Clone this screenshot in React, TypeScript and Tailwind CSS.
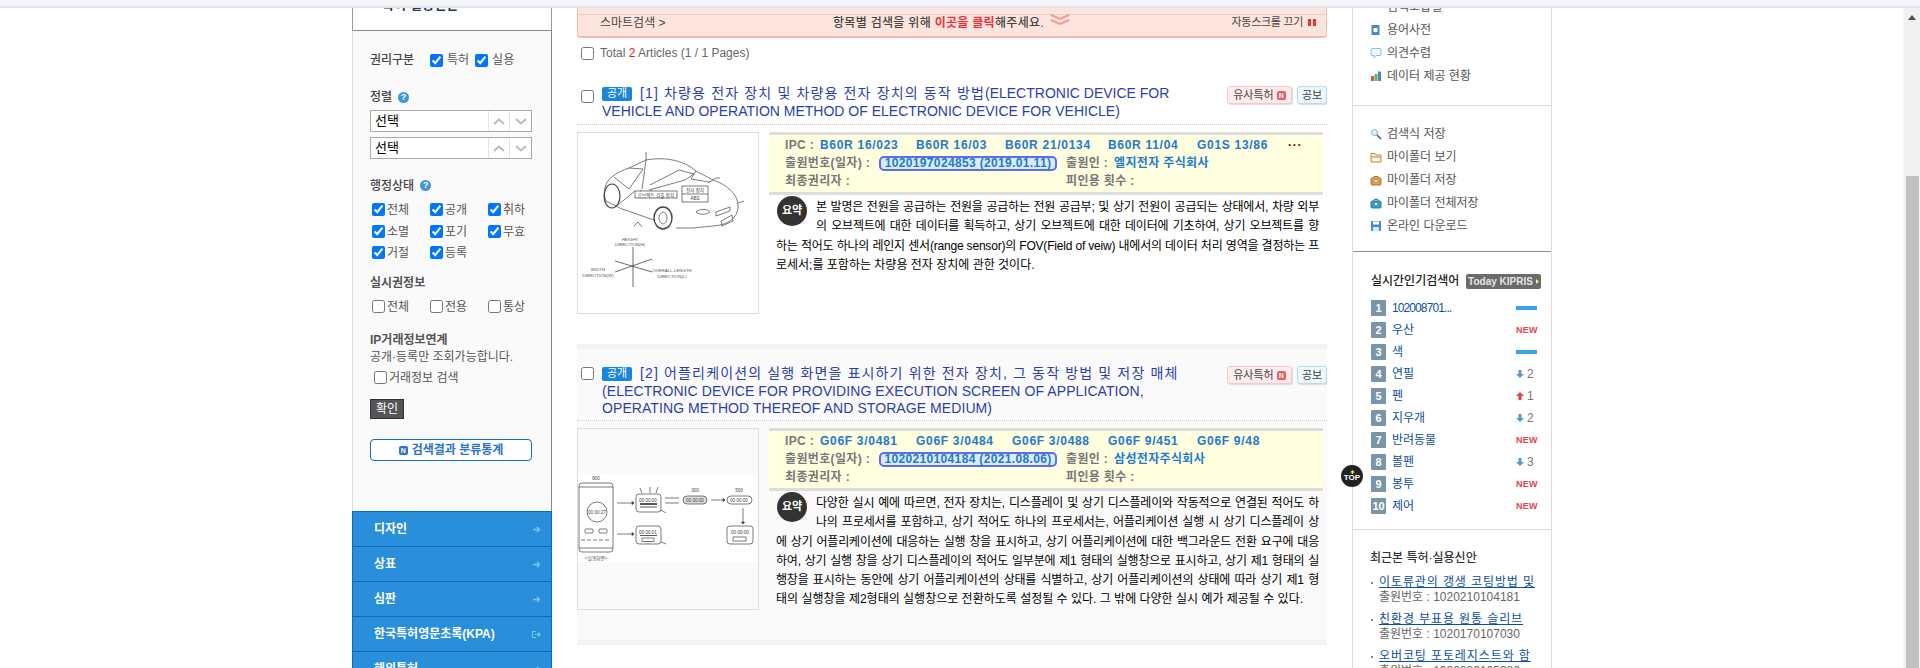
import React from "react";

const font = "font-['Liberation_Sans','Noto_Sans_CJK_KR',sans-serif]";

function Check({ label, checked, w = "w-[58px]" }: { label: string; checked?: boolean; w?: string }) {
  return (
    <label className={`flex items-center gap-[2px] ${w} text-[12px] leading-[13px] text-[#555]`}>
      <input type="checkbox" defaultChecked={checked} className="shrink-0" />
      <span className="translate-y-[1px]">{label}</span>
    </label>
  );
}

function Help() {
  return (
    <span className="flex h-[11px] w-[11px] items-center justify-center rounded-full bg-[#3f97d8] text-[9px] font-bold leading-none text-white">?</span>
  );
}

function FakeSelect() {
  return (
    <div className="flex h-[22px] w-[162px] items-center border border-[#aaa] bg-white">
      <span className="flex-1 pl-[4px] text-[13px] text-black">선택</span>
      <span className="flex h-full w-[21px] items-center justify-center border-l border-[#e6e6e6]">
        <svg width="12" height="7" viewBox="0 0 12 7"><path d="M1 6 6 1.5 11 6" fill="none" stroke="#bbb" strokeWidth="2" /></svg>
      </span>
      <span className="flex h-full w-[22px] items-center justify-center border-l border-[#e6e6e6]">
        <svg width="12" height="7" viewBox="0 0 12 7"><path d="M1 1 6 5.5 11 1" fill="none" stroke="#bbb" strokeWidth="2" /></svg>
      </span>
    </div>
  );
}

function NavRow({ label, door }: { label: string; door?: boolean }) {
  return (
    <div className="flex h-[35px] shrink-0 items-center justify-between border-t border-[#0d68bf] bg-[#298fdb] pl-[21px] pr-[10px] text-[12px] font-bold text-white">
      <span>{label}</span>
      <svg width="9" height="7" viewBox="0 0 9 7">
        {door ? <path d="M4 .5H.5v6H4M3 3.5h5M6 1.5l2 2-2 2" fill="none" stroke="#7cc3ee" strokeWidth="1.2" /> : <path d="M1 3.5h6M5 1l2.5 2.5L5 6" fill="none" stroke="#7cc3ee" strokeWidth="1.4" />}
      </svg>
    </div>
  );
}

function LeftColumn() {
  return (
    <div className="flex w-[200px] shrink-0 flex-col overflow-hidden">
      <div className="h-[22px] shrink-0 overflow-hidden border-x border-[#999] bg-white pl-[29px]">
        <div className="-mt-[10px] text-[13px] font-bold leading-[14px] text-[#1f3a68]">특허·실용신안</div>
      </div>
      <div className="flex h-[481px] shrink-0 flex-col border-t border-r border-t-[#888] border-r-[#888] border-l border-l-[#ddd] bg-[#fafafa] pl-[17px]">
        <div className="mt-[22px] flex h-[14px] items-center text-[12px] font-medium text-[#444]">
          <span className="w-[60px]">권리구분</span>
          <label className="mr-[6px] flex items-center gap-[4px] font-normal text-[#555]"><input type="checkbox" defaultChecked />특허</label>
          <label className="flex items-center gap-[4px] font-normal text-[#555]"><input type="checkbox" defaultChecked />실용</label>
        </div>
        <div className="mt-[23px] flex h-[14px] items-center gap-[6px] text-[12px] font-medium text-[#444]">정렬 <Help /></div>
        <div className="mt-[6px]"><FakeSelect /></div>
        <div className="mt-[5px]"><FakeSelect /></div>
        <div className="mt-[19px] flex h-[14px] items-center gap-[6px] pt-[1px] text-[12px] font-medium text-[#444]">행정상태 <Help /></div>
        <div className="mt-[11px] grid grid-cols-[58px_58px_58px] gap-y-[8.5px] pl-[2px]">
          <Check label="전체" checked /><Check label="공개" checked /><Check label="취하" checked />
          <Check label="소멸" checked /><Check label="포기" checked /><Check label="무효" checked />
          <Check label="거절" checked /><Check label="등록" checked />
        </div>
        <div className="mt-[16px] h-[14px] pt-[1px] text-[12px] font-bold leading-[14px] text-[#555]">실시권정보</div>
        <div className="mt-[11px] grid grid-cols-[58px_58px_58px] pl-[2px]">
          <Check label="전체" /><Check label="전용" /><Check label="통상" />
        </div>
        <div className="mt-[19px] h-[14px] pt-[1px] text-[12px] font-bold leading-[14px] text-[#555]">IP거래정보연계</div>
        <div className="mt-[3px] h-[14px] pt-[1px] text-[12px] leading-[14px] text-[#555]">공개·등록만 조회가능합니다.</div>
        <div className="mt-[8px] pl-[4px]"><Check label="거래정보 검색" w="w-[120px]" /></div>
        <div className="mt-[15px] flex h-[20px] w-[34px] items-center justify-center border border-[#333] bg-[#555] text-[12px] text-white">확인</div>
        <div className="mt-[20px] flex h-[22px] w-[162px] items-center justify-center gap-[4px] rounded-[4px] border border-[#0b6fc6] bg-white text-[12px] font-bold text-[#2b74c8]">
          <span className="flex h-[9px] w-[9px] items-center justify-center rounded-[2px] bg-[#2b74c8] text-[7px] leading-none text-white">N</span>
          검색결과 분류통계
        </div>
      </div>
      <div className="flex flex-col border-x border-[#0d68bf]">
        <NavRow label="디자인" />
        <NavRow label="상표" />
        <NavRow label="심판" />
        <NavRow label="한국특허영문초록(KPA)" door />
        <NavRow label="해외특허" />
      </div>
    </div>
  );
}

function CarDrawing() {
  return (
    <svg width="180" height="180" viewBox="0 0 180 180" fill="none" stroke="#444" strokeWidth=".7">
      <path d="M68 27V19M27 55c1-9 12-16 24-20l17-8c17-3 36-1 50 11l17 9c15 5 25 15 25 26 0 12-10 19-25 20l-20 2H98M76 87 44 76 28 68c-2-5-2-9-1-13" />
      <path d="M36 44l15 12 14-20-14-1M68 27l-4 29M72 52l29-15 15 4-9 6-36 10M118 38l-5 8 18 3" />
      <path d="M62 57c3 3 9 3 12 0M40 72l17-14" />
      <ellipse cx="34" cy="63" rx="8" ry="12" strokeWidth="1.2" />
      <ellipse cx="85" cy="85" rx="9" ry="11" strokeWidth="1.4" />
      <ellipse cx="85" cy="85" rx="4" ry="6" />
      <path d="M118 79c4-4 12-3 14 0-4 3-11 3-14 0ZM138 79l14-5v4l-14 5ZM143 88l11-6 1 6-11 5Z" />
      <rect x="57" y="58" width="42" height="7" fill="#fff" />
      <text x="78" y="63.5" fontSize="4.6" fill="#444" stroke="none" textAnchor="middle">오브젝트 검출 장치</text>
      <rect x="104" y="53" width="26" height="16" fill="#fff" />
      <path d="M104 61h26" />
      <text x="117" y="59" fontSize="4.6" fill="#444" stroke="none" textAnchor="middle">전자 장치</text>
      <text x="117" y="67" fontSize="4.6" fill="#444" stroke="none" textAnchor="middle">ABS</text>
      <path d="M130 50l8-5h4M160 70l6-2M64 94l-4-5-4 4" />
      <path d="M55 114v40M37 128l37 11M37 139l37-13" strokeWidth=".8" />
      <g fill="#555" stroke="none" fontSize="4.4" textAnchor="middle">
        <text x="52" y="108">HEIGHT</text>
        <text x="52" y="113">DIRECTION(H)</text>
        <text x="20" y="138">WIDTH</text>
        <text x="20" y="144">DIRECTION(W)</text>
        <text x="94" y="139">OVERALL-LENGTH</text>
        <text x="94" y="145">DIRECTION(L)</text>
      </g>
    </svg>
  );
}

function FlowDrawing() {
  return (
    <svg width="180" height="180" viewBox="0 0 180 180" fill="none" stroke="#444" strokeWidth=".7">
      <rect x="0" y="46" width="180" height="87" fill="#fff" stroke="none" />
      <rect x="1" y="54" width="34" height="69" rx="3" />
      <path d="M1 58h34M1 119h34" />
      <circle cx="19" cy="83" r="10" />
      <rect x="7" y="100" width="8" height="4" rx="1" />
      <rect x="21" y="100" width="8" height="4" rx="1" />
      <path d="M3 111h30" strokeDasharray="4 2" />
      <path d="M39 74h17M39 105h17M87 69h14M87 74h14M133 71h14M165 79v16" />
      <path d="M56 74l-2-1.500v3ZM56 105l-2-1.500v3ZM147 71l-2-1.500v3ZM165 95l-1.500-2h3Z" fill="#444" />
      <rect x="58" y="65" width="25" height="18" rx="3" />
      <path d="M62 74.500h17M62 75.500h17M62 78h17" stroke="#111" />
      <rect x="58" y="97" width="25" height="18" rx="3" />
      <path d="M62 106.500h17" stroke="#111" />
      <rect x="64" y="109" width="12" height="3.500" />
      <rect x="105" y="67" width="24" height="8" rx="4" fill="#ddd" />
      <rect x="149" y="67" width="25" height="8" rx="4" />
      <rect x="149" y="97" width="26" height="18" rx="3" />
      <rect x="155" y="108" width="13" height="4" />
      <path d="M62 59l2 5M72 58v6M80 58l-2 6M83 81l5 3M83 113l5 2" />
      <g fill="#444" stroke="none" fontSize="4.600" textAnchor="middle">
        <text x="19" y="85">00:00:27</text>
        <text x="70" y="73">00:00:00</text>
        <text x="70" y="105">00:00:01</text>
        <text x="117" y="73">00:00:00</text>
        <text x="161" y="73">00:00:00</text>
        <text x="162" y="105">00:00:00</text>
        <text x="18" y="131">&lt;실행화면&gt;</text>
        <text x="18" y="51">800</text>
        <text x="117" y="63">300</text>
        <text x="161" y="63">500</text>
      </g>
    </svg>
  );
}

function Yellow({ ipc, num, applicant, more }: { ipc: [string, string][]; num: string; applicant: string; more?: boolean }) {
  return (
    <div className="h-[63px] w-[554px] shrink-0 border-y-[3px] border-[#ddd] bg-[#ffffe0] pl-[16px] text-[12px] font-bold tracking-[0.35px] text-[#777]">
      <div className="flex h-[18px] items-center pt-[2px]">
        <span className="w-[35px]">IPC :</span>
        <span className="flex flex-1 tracking-[0.7px] text-[#2279d0]">
          {ipc.map(([code, w]) => (
            <span key={code} className={`${w} whitespace-pre`}>{code}</span>
          ))}
          {more && <span className="ml-[-6px] text-[#800]">···</span>}
        </span>
      </div>
      <div className="flex h-[18px] items-center pt-[2px]">
        <span className="w-[94px]">출원번호(일자) :</span>
        <span className="flex h-[15px] w-[178px] items-center justify-center rounded-[5px] border-2 border-[#5a6cf0] bg-[#dcecf5] text-[#2279d0]">{num}</span>
        <span className="ml-[9px] w-[48px]">출원인 :</span>
        <span className="text-[#2279d0]">{applicant}</span>
      </div>
      <div className="flex h-[18px] items-center pt-[2px]">
        <span className="w-[281px]">최종권리자 :</span>
        <span>피인용 횟수 :</span>
      </div>
    </div>
  );
}

function Abstract({ lines }: { lines: string[] }) {
  return (
    <div className="mt-[1px] ml-[7px] w-[543px] pt-[2px] text-[12px] leading-[19.3px] text-black">
      <div className="float-left mr-[9px] ml-[1px] -mt-[2px] flex h-[30px] w-[30px] items-center justify-center rounded-full bg-[#333] text-[11px] font-bold text-white">요약</div>
      {lines.map((l, i) => (
        <div key={i} className={i === lines.length - 1 ? "whitespace-nowrap" : "whitespace-nowrap tracking-[-0.2px] [text-align-last:justify]"}>{l}</div>
      ))}
    </div>
  );
}

function TitleActions() {
  return (
    <div className="flex shrink-0 gap-[5px] pt-[1px]">
      <span className="flex h-[18px] w-[65px] items-center justify-center gap-[3px] rounded-[3px] border border-[#f6c9c9] bg-[#ffecec] text-[11px] text-[#444] shadow-[1px_1px_1px_#ddd]">
        유사특허
        <span className="flex h-[9px] w-[9px] items-center justify-center rounded-[2px] bg-[#ee5a64] text-[7px] font-bold leading-none text-white">N</span>
      </span>
      <span className="flex h-[18px] w-[30px] items-center justify-center rounded-[3px] border border-[#b7d9e8] bg-[#eef7fb] text-[11px] text-[#444] shadow-[1px_1px_1px_#ddd]">공보</span>
    </div>
  );
}

function Badge() {
  return <span className="mr-[8px] inline-flex h-[14px] w-[30px] items-center justify-center rounded-[2px] bg-[#1b86d9] align-[1px] text-[11px] font-normal tracking-normal text-white">공개</span>;
}

function Results() {
  return (
    <div className="flex w-[750px] shrink-0 flex-col overflow-hidden">
      <div className="h-[30px] shrink-0 rounded-b-[4px] border-b-[2px] border-x border-[#f6bca8] bg-[#fde4dc] text-[12px] text-[#444]">
        <div className="h-[7px] border-b border-[#e9cfc7]" />
        <div className="flex h-[15px] items-center pl-[22px] pr-[10px]">
          <span className="w-[233px]">스마트검색 &gt;</span>
          <span className="font-medium tracking-[0.3px]">항목별 검색을 위해 <b className="text-[#e8343c]">이곳을 클릭</b>해주세요.</span>
          <svg className="ml-[6px] -mt-[6px]" width="20" height="12" viewBox="0 0 20 12" fill="none" stroke="#f59b8f" strokeWidth="2"><path d="M1 1l9 4 9-4M1 6l9 4 9-4" /></svg>
          <span className="ml-auto text-[11px] tracking-[-0.3px]">자동스크롤 끄기</span>
          <span className="ml-[5px] flex gap-[2px]"><i className="block h-[7px] w-[3px] bg-[#e33]" /><i className="block h-[7px] w-[3px] bg-[#e33]" /></span>
        </div>
      </div>
      <div className="mt-[8px] flex h-[14px] items-center pl-[4px] text-[12px] text-[#666]">
        <input type="checkbox" />
        <span className="ml-[6px]">Total <span className="text-[#e81c1c]">2</span> Articles (1 / 1 Pages)</span>
      </div>

      <div className="mt-[25px] flex h-[39px] items-start pl-[4px]">
        <input type="checkbox" className="mt-[5px] shrink-0" />
        <div className="ml-[8px] flex-1 whitespace-nowrap text-[14px] leading-[17.5px] text-[#2c3fa8]">
          <Badge /><span className="tracking-[1.15px]">[1] 차량용 전자 장치 및 차량용 전자 장치의 동작 방법</span>(ELECTRONIC DEVICE FOR<br />
          VEHICLE AND OPERATION METHOD OF ELECTRONIC DEVICE FOR VEHICLE)
        </div>
        <TitleActions />
      </div>
      <div className="h-[1px] border-t border-dotted border-[#ccc]" />
      <div className="mt-[7px] flex h-[212px] shrink-0 gap-[10px]">
        <div className="h-[182px] w-[182px] shrink-0 border border-[#ddd] bg-white"><CarDrawing /></div>
        <div>
          <Yellow
            more
            ipc={[["B60R 16/023", "w-[96px]"], ["B60R 16/03", "w-[89px]"], ["B60R 21/0134", "w-[103px]"], ["B60R 11/04", "w-[89px]"], ["G01S 13/86", "w-[97px]"]]}
            num="1020197024853 (2019.01.11)"
            applicant="엘지전자 주식회사"
          />
          <Abstract lines={[
            "본 발명은 전원을 공급하는 전원을 공급하는 전원 공급부; 및 상기 전원이 공급되는 상태에서, 차량 외부",
            "의 오브젝트에 대한 데이터를 획득하고, 상기 오브젝트에 대한 데이터에 기초하여, 상기 오브젝트를 향",
            "하는 적어도 하나의 레인지 센서(range sensor)의 FOV(Field of veiw) 내에서의 데이터 처리 영역을 결정하는 프",
            "로세서;를 포함하는 차량용 전자 장치에 관한 것이다.",
          ]} />
        </div>
      </div>

      <div className="h-[301px] shrink-0 border-y-[5px] border-[#f3f3f3] bg-[#fafafa]">
        <div className="mt-[16px] flex h-[55px] items-start pl-[4px]">
          <input type="checkbox" className="mt-[2px] shrink-0" />
          <div className="ml-[8px] flex-1 whitespace-nowrap text-[14px] leading-[17.5px] tracking-[0.08px] text-[#2c3fa8]">
            <Badge /><span className="tracking-[1.15px]">[2] 어플리케이션의 실행 화면을 표시하기 위한 전자 장치, 그 동작 방법 및 저장 매체</span><br />
            (ELECTRONIC DEVICE FOR PROVIDING EXECUTION SCREEN OF APPLICATION,<br />
            OPERATING METHOD THEREOF AND STORAGE MEDIUM)
          </div>
          <TitleActions />
        </div>
        <div className="h-[1px] border-t border-dotted border-[#ccc]" />
        <div className="mt-[7px] flex gap-[10px]">
          <div className="h-[182px] w-[182px] shrink-0 border border-[#ddd] bg-[#fafafa]"><FlowDrawing /></div>
          <div>
            <Yellow
              ipc={[["G06F 3/0481", "w-[96px]"], ["G06F 3/0484", "w-[96px]"], ["G06F 3/0488", "w-[96px]"], ["G06F 9/451", "w-[89px]"], ["G06F 9/48", "w-[80px]"]]}
              num="1020210104184 (2021.08.06)"
              applicant="삼성전자주식회사"
            />
            <Abstract lines={[
              "다양한 실시 예에 따르면, 전자 장치는, 디스플레이 및 상기 디스플레이와 작동적으로 연결된 적어도 하",
              "나의 프로세서를 포함하고, 상기 적어도 하나의 프로세서는, 어플리케이션 실행 시 상기 디스플레이 상",
              "에 상기 어플리케이션에 대응하는 실행 창을 표시하고, 상기 어플리케이션에 대한 백그라운드 전환 요구에 대응",
              "하여, 상기 실행 창을 상기 디스플레이의 적어도 일부분에 제1 형태의 실행창으로 표시하고, 상기 제1 형태의 실",
              "행창을 표시하는 동안에 상기 어플리케이션의 상태를 식별하고, 상기 어플리케이션의 상태에 따라 상기 제1 형",
              "태의 실행창을 제2형태의 실행창으로 전환하도록 설정될 수 있다. 그 밖에 다양한 실시 예가 제공될 수 있다.",
            ]} />
          </div>
        </div>
      </div>
    </div>
  );
}

function MiniIcon({ kind }: { kind: string }) {
  const c: Record<string, React.ReactNode> = {
    dict: <><rect x="1.5" y="1" width="8" height="10" fill="#4a86c8" /><rect x="3.5" y="4" width="4" height="4" fill="#fff" /></>,
    talk: <path d="M2 1.500h8a1 1 0 0 1 1 1v5a1 1 0 0 1-1 1H6l-2 2.500V8.500H2a1 1 0 0 1-1-1v-5a1 1 0 0 1 1-1Z" fill="#eef6ff" stroke="#8cc0ee" />,
    chart: <><rect x="1" y="6" width="3" height="5" fill="#d9534f" /><rect x="4.500" y="4" width="3" height="7" fill="#5cb85c" /><rect x="8" y="1.500" width="3" height="9.500" fill="#4a86c8" /></>,
    search: <><circle cx="4.500" cy="4.500" r="3" fill="#dff0ff" stroke="#7fa8c9" /><path d="M7 7l4 4" stroke="#2d5f94" strokeWidth="1.600" /></>,
    folder: <path d="M1 2.500h4l1 1.500h5v7H1Z M1 6h10" fill="#fff3df" stroke="#c0873f" />,
    case: <><rect x="1" y="4" width="10" height="7" rx="1" fill="#d79c54" stroke="#b37a35" /><path d="M4 4V2.500h4V4" fill="none" stroke="#b37a35" /><rect x="5" y="6" width="2" height="2" fill="#ffe08a" /></>,
    caseb: <><rect x="1" y="4" width="10" height="7" rx="1" fill="#3d9cc4" stroke="#2b7ea3" /><path d="M4 4V2.500h4V4" fill="none" stroke="#2b7ea3" /><rect x="5" y="6" width="2" height="2" fill="#fff" /></>,
    disk: <><rect x="1" y="1" width="10" height="10" rx="1" fill="#4a86c8" /><rect x="3" y="1.500" width="6" height="3" fill="#fff" /><rect x="3" y="7" width="6" height="4" fill="#dbe8f5" /></>,
    grid: <><rect x="1" y="0" width="4" height="4" fill="#d9534f" /><rect x="7" y="0" width="4" height="4" fill="#d9534f" /></>,
  };
  return <svg width="12" height="12" viewBox="0 0 12 12" className="shrink-0">{c[kind]}</svg>;
}

function Tool({ kind, label }: { kind: string; label: string }) {
  return (
    <div className="flex h-[23px] items-center gap-[5px] text-[12px] text-[#555]">
      <MiniIcon kind={kind} />
      <span>{label}</span>
    </div>
  );
}

function Indicator({ v }: { v: string }) {
  if (v === "new") return <span className="w-[21px] text-[9px] font-black leading-none tracking-[0.3px] text-[#e6424c]">NEW</span>;
  if (v === "same") return <span className="block h-[4px] w-[21px] bg-[#36a4ea]" />;
  const up = v[0] === "u";
  return (
    <span className="flex w-[21px] items-center gap-[3px] text-[12px] leading-none text-[#777]">
      <svg width="8" height="8" viewBox="0 0 8 8"><path d={up ? "M4 0 8 4H5.500v4h-3V4H0Z" : "M4 8 8 4H5.500V0h-3v4H0Z"} fill={up ? "#e6424c" : "#5f93d6"} /></svg>
      {v.slice(1)}
    </span>
  );
}

const ranks: [string, string][] = [
  ["102008701...", "same"], ["우산", "new"], ["색", "same"], ["연필", "d2"], ["펜", "u1"],
  ["지우개", "d2"], ["반려동물", "new"], ["볼펜", "d3"], ["봉투", "new"], ["제어", "new"],
];

function RightColumn() {
  return (
    <div className="flex h-[660px] w-[200px] shrink-0 flex-col overflow-hidden border-x border-[#ddd]">
      <div className="h-[98px] shrink-0 overflow-hidden border-b border-[#ddd] pl-[17px]">
        <div className="-mt-[13px]">
          <Tool kind="grid" label="검색조합결" />
          <Tool kind="dict" label="용어사전" />
          <Tool kind="talk" label="의견수렴" />
          <Tool kind="chart" label="데이터 제공 현황" />
        </div>
      </div>
      <div className="h-[146px] shrink-0 border-b border-[#888] pl-[17px] pt-[16px]">
        <Tool kind="search" label="검색식 저장" />
        <Tool kind="folder" label="마이폴더 보기" />
        <Tool kind="case" label="마이폴더 저장" />
        <Tool kind="caseb" label="마이폴더 전체저장" />
        <Tool kind="disk" label="온라인 다운로드" />
      </div>
      <div className="h-[278px] shrink-0 border-b border-[#ddd] pl-[18px]">
        <div className="mt-[22px] flex h-[14px] items-center justify-between pr-[10px]">
          <span className="text-[12px] font-medium leading-none text-[#222]">실시간인기검색어</span>
          <span className="flex h-[15px] w-[75px] items-center justify-center gap-[3px] rounded-[2px] bg-[#6b6b6b] text-[10px] font-bold text-[#e4e4e4]">
            Today KIPRIS
            <svg width="3" height="5" viewBox="0 0 3 5"><path d="M0 0l3 2.500L0 5Z" fill="#ffe98a" /></svg>
          </span>
        </div>
        <div className="mt-[12px] flex flex-col gap-[6px]">
          {ranks.map(([t, v], i) => (
            <div key={i} className="flex h-[16px] items-center">
              <span className="flex h-[16px] w-[15px] shrink-0 items-center justify-center rounded-[1px] bg-[#7b95a8] text-[11px] font-bold leading-none text-white">{i + 1}</span>
              <span className={i === 0 ? "ml-[6px] flex-1 text-[12px] leading-none tracking-[-0.9px] text-[#0c4f9c]" : "ml-[6px] flex-1 text-[12px] leading-none text-[#0c4f9c]"}>{t}</span>
              <span className="mr-[14px] flex items-center"><Indicator v={v} /></span>
            </div>
          ))}
        </div>
      </div>
      <div className="pl-[17px] pt-[21px]">
        <div className="text-[12px] font-medium leading-[14px] text-[#333]">최근본 특허·실용신안</div>
        <div className="mt-[10px] flex flex-col gap-[7px]">
          {[["이토류관의 갱생 코팅방법 및", "1020210104181"], ["친환경 부표용 원통 슬리브", "1020170107030"], ["오버코팅 포토레지스트와 함", "1020080105386"]].map(([t, n]) => (
            <div key={n} className="relative pl-[9px] text-[12px] leading-[15px]">
              <span className="absolute left-[1px] top-[7px] h-[2px] w-[2px] bg-[#888]" />
              <div className="whitespace-nowrap tracking-[0.9px] text-[#0c4f9c] underline">{t}</div>
              <div className="text-[#666]">출원번호 : {n}</div>
            </div>
          ))}
        </div>
      </div>
    </div>
  );
}

function Scrollbar() {
  return (
    <div className="flex w-[17px] shrink-0 flex-col items-center border-l border-[#f7f7f7] bg-[#f1f1f1]">
      <svg className="mt-[7px]" width="8" height="5" viewBox="0 0 8 5"><path d="M4 0l4 5H0Z" fill="#505050" /></svg>
      <div className="mt-[156px] w-[13px] flex-1 bg-[#c1c1c1]" />
    </div>
  );
}

export default function App() {
  return (
    <div className={`flex h-[668px] w-[1920px] flex-col overflow-hidden bg-white ${font}`}>
      <div className="h-[8px] shrink-0 border-b-2 border-[#e4e4e4] bg-[#f3f5fb]" />
      <div className="relative flex min-h-0 flex-1">
        <div className="flex flex-1 gap-[25px] pl-[352px]">
          <LeftColumn />
          <Results />
          <RightColumn />
        </div>
        <Scrollbar />
        <div className="absolute left-[1341px] top-[457px] flex h-[22px] w-[22px] flex-col items-center justify-center rounded-full bg-[#222] text-[8px] font-black leading-[8px] text-white">
          <svg width="5" height="4" viewBox="0 0 5 4"><path d="M2.500 0 5 2.500H3.200V4H1.800V2.500H0Z" fill="#ffe24a" /></svg>
          TOP
        </div>
      </div>
    </div>
  );
}
